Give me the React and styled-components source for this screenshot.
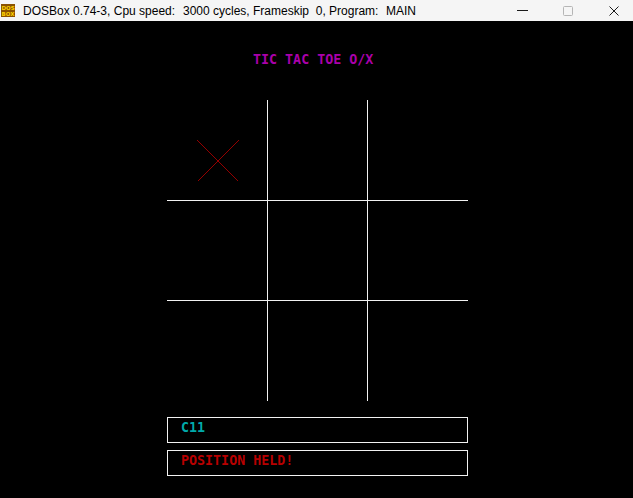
import React from "react";
import styled, { createGlobalStyle } from "styled-components";

const GlobalStyle = createGlobalStyle`
  html, body {
    margin: 0;
    padding: 0;
    background: #000000;
  }
  #root {
    width: 633px;
    height: 498px;
    overflow: hidden;
  }
`;

const Window = styled.div`
  width: 633px;
  height: 498px;
  display: flex;
  flex-direction: column;
  background: #000000;
`;

const TitleBar = styled.div`
  height: 21px;
  flex-shrink: 0;
  display: flex;
  align-items: center;
  overflow: hidden;
  background: #f5f5f5;
  font-family: "Liberation Sans", Arial, sans-serif;
  font-size: 12px;
  color: #000000;
  white-space: pre;
`;

const AppIcon = styled.svg`
  margin: 0 8px 0 1px;
  flex-shrink: 0;
`;

const TitleSegment = styled.span`
  display: inline-block;
  padding-top: 1px;
  width: ${(p) => (p.$width ? `${p.$width}px` : "auto")};
`;

const Controls = styled.div`
  margin-left: auto;
  margin-right: -4px;
  display: flex;
  align-items: center;
  height: 100%;
`;

const ControlButton = styled.div`
  width: 46px;
  height: 21px;
  display: flex;
  align-items: center;
  justify-content: center;
`;

const Screen = styled.div`
  flex: 1;
  display: flex;
  flex-direction: column;
  padding: 31px 0 0 167px;
  font-family: "DejaVu Sans Mono", "Liberation Mono", monospace;
  font-weight: bold;
  font-size: 13.33px;
  line-height: 16px;
`;

const Heading = styled.div`
  margin-left: 86px;
  height: 16px;
  color: #aa00aa;
  white-space: pre;
`;

const Board = styled.div`
  margin-top: 32px;
  display: grid;
  grid-template-columns: 101px 100px 100px;
  grid-template-rows: 101px 100px 100px;
  width: 301px;
`;

const Cell = styled.div`
  box-sizing: border-box;
  display: flex;
  align-items: flex-start;
  border-right: ${(p) => (p.$right ? "1px solid #f2f2f2" : "none")};
  border-bottom: ${(p) => (p.$bottom ? "1px solid #f2f2f2" : "none")};
`;

const Mark = styled.svg`
  margin: 40px 0 0 30px;
`;

const Messages = styled.div`
  margin-top: 16px;
  display: flex;
  flex-direction: column;
  gap: 7px;
`;

const MessageBox = styled.div`
  box-sizing: border-box;
  width: 301px;
  height: 26px;
  border: 1px solid #f2f2f2;
  padding: 2px 13px 0;
  color: ${(p) => p.$color};
  white-space: pre;
`;

const board = [
  ["X", "", ""],
  ["", "", ""],
  ["", "", ""],
];

const App = () => {
  return (
    <Window>
      <GlobalStyle />
      <TitleBar>
        <AppIcon width="14" height="13" viewBox="0 0 14 13">
          <rect x="0" y="0" width="14" height="13" fill="#8a5200" />
          <text
            x="7"
            y="6"
            fontSize="5.5"
            fontFamily="DejaVu Sans"
            fontWeight="bold"
            fill="#ffd200"
            textAnchor="middle"
          >
            DOS
          </text>
          <text
            x="7"
            y="12"
            fontSize="5.5"
            fontFamily="DejaVu Sans"
            fontWeight="bold"
            fill="#ffd200"
            textAnchor="middle"
          >
            BOX
          </text>
        </AppIcon>
        <TitleSegment $width={160}>DOSBox 0.74-3, Cpu speed:</TitleSegment>
        <TitleSegment $width={203}>3000 cycles, Frameskip  0, Program:</TitleSegment>
        <TitleSegment>MAIN</TitleSegment>
        <Controls>
          <ControlButton>
            <svg width="11" height="11" viewBox="0 0 11 11">
              <line x1="0" y1="5.5" x2="11" y2="5.5" stroke="#1a1a1a" strokeWidth="1" />
            </svg>
          </ControlButton>
          <ControlButton>
            <svg width="10" height="10" viewBox="0 0 10 10">
              <rect x="0.5" y="0.5" width="9" height="9" rx="1" fill="none" stroke="#b5b5b5" strokeWidth="1" />
            </svg>
          </ControlButton>
          <ControlButton>
            <svg width="10" height="10" viewBox="0 0 10 10">
              <path d="M0.5 0.5 L9.5 9.5 M9.5 0.5 L0.5 9.5" stroke="#1a1a1a" strokeWidth="1" />
            </svg>
          </ControlButton>
        </Controls>
      </TitleBar>
      <Screen>
        <Heading>TIC TAC TOE O/X</Heading>
        <Board>
          {board.map((row, r) =>
            row.map((value, c) => (
              <Cell key={`${r}-${c}`} $right={c < 2} $bottom={r < 2}>
                {value === "X" && (
                  <Mark width="42" height="42" viewBox="0 0 42 42">
                    <path
                      d="M0.5 0.5 L41.5 41.5 M41.5 0.5 L0.5 41.5"
                      stroke="#950000"
                      strokeWidth="1"
                      shapeRendering="crispEdges"
                    />
                  </Mark>
                )}
              </Cell>
            ))
          )}
        </Board>
        <Messages>
          <MessageBox $color="#00aaaa">C11</MessageBox>
          <MessageBox $color="#b80000">POSITION HELD!</MessageBox>
        </Messages>
      </Screen>
    </Window>
  );
};

export default App;
